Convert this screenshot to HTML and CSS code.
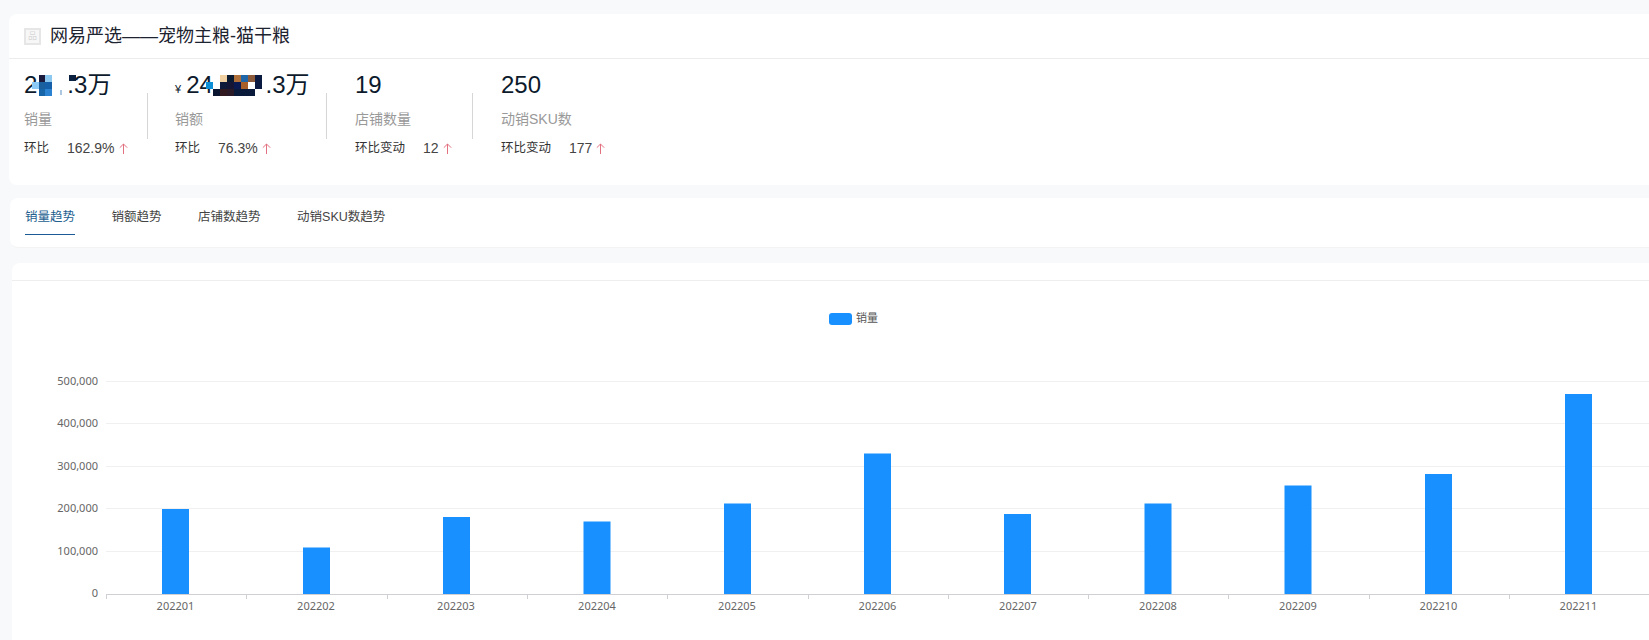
FILE: index.html
```html
<!DOCTYPE html>
<html lang="zh-CN">
<head>
<meta charset="utf-8">
<title>网易严选——宠物主粮-猫干粮</title>
<link rel="stylesheet" href="styles.css">
</head>
<body>
<main class="page">
  <section class="card card-summary">
    <header class="summary-head">
      <span class="thumb">品</span>
      <h1 class="title">网易严选——宠物主粮-猫干粮</h1>
    </header>
    <div class="stats">
      <div class="stat stat-a">
        <div class="value">2<svg class="mosaic mosaic-a" viewBox="0 0 44 21" aria-hidden="true">
            <rect x="7" y="0" width="6" height="7" fill="#1c1a3c"/><rect x="13" y="0" width="7" height="7" fill="#8cc8f0"/>
            <rect x="37" y="0" width="7" height="6" fill="#0a2040"/>
            <rect x="0" y="7" width="7" height="7" fill="#8ccbf5"/><rect x="7" y="7" width="6" height="7" fill="#1a5f9e"/><rect x="13" y="7" width="7" height="7" fill="#1560a8"/>
            <rect x="7" y="14" width="6" height="7" fill="#1565a8"/><rect x="13" y="14" width="7" height="7" fill="#2a82d0"/>
            <rect x="28.5" y="15" width="1" height="5" fill="#5a90c0"/>
          </svg>.3万</div>
        <div class="label">销量</div>
        <div class="delta"><span>环比</span><span class="delta-num">162.9%</span><svg class="arrow" viewBox="0 0 9 11" aria-hidden="true"><path d="M4.5 11V1M.8 4.7 4.5 1l3.7 3.7"/></svg></div>
      </div>
      <div class="divider"></div>
      <div class="stat stat-b">
        <div class="value"><span class="currency">¥</span>24,<svg class="mosaic mosaic-b" viewBox="0 0 56 21" aria-hidden="true">
            <rect x="7" y="0" width="7" height="7" fill="#f0d0a0"/><rect x="14" y="0" width="7" height="7" fill="#0a1a30"/><rect x="21" y="0" width="7" height="7" fill="#b0703a"/><rect x="28" y="0" width="7" height="7" fill="#1f66a8"/><rect x="35" y="0" width="7" height="7" fill="#8a5a3a"/><rect x="42" y="0" width="7" height="7" fill="#0a1a40"/>
            <rect x="7" y="7" width="7" height="7" fill="#0f1a3a"/><rect x="14" y="7" width="7" height="7" fill="#151535"/><rect x="21" y="7" width="7" height="7" fill="#0a1a50"/><rect x="28" y="7" width="7" height="7" fill="#a85f28"/><rect x="35" y="7" width="7" height="7" fill="#fff"/><rect x="42" y="7" width="7" height="7" fill="#0a1a40"/>
            <rect x="0" y="14" width="7" height="7" fill="#0a1530"/><rect x="7" y="14" width="7" height="7" fill="#301a20"/><rect x="14" y="14" width="7" height="7" fill="#2a1a28"/><rect x="21" y="14" width="7" height="7" fill="#0a1a3a"/><rect x="28" y="14" width="7" height="7" fill="#0a1a3a"/><rect x="35" y="14" width="7" height="7" fill="#0a1a3a"/>
            <rect x="-7" y="7" width="7" height="7" fill="#0d8fd8"/>
          </svg>.3万</div>
        <div class="label">销额</div>
        <div class="delta"><span>环比</span><span class="delta-num">76.3%</span><svg class="arrow" viewBox="0 0 9 11" aria-hidden="true"><path d="M4.5 11V1M.8 4.7 4.5 1l3.7 3.7"/></svg></div>
      </div>
      <div class="divider"></div>
      <div class="stat stat-c">
        <div class="value">19</div>
        <div class="label">店铺数量</div>
        <div class="delta"><span>环比变动</span><span class="delta-num">12</span><svg class="arrow" viewBox="0 0 9 11" aria-hidden="true"><path d="M4.5 11V1M.8 4.7 4.5 1l3.7 3.7"/></svg></div>
      </div>
      <div class="divider"></div>
      <div class="stat">
        <div class="value">250</div>
        <div class="label">动销SKU数</div>
        <div class="delta"><span>环比变动</span><span class="delta-num">177</span><svg class="arrow" viewBox="0 0 9 11" aria-hidden="true"><path d="M4.5 11V1M.8 4.7 4.5 1l3.7 3.7"/></svg></div>
      </div>
    </div>
  </section>

  <nav class="card card-tabs">
    <a class="tab tab-active">销量趋势</a>
    <a class="tab">销额趋势</a>
    <a class="tab">店铺数趋势</a>
    <a class="tab">动销SKU数趋势</a>
  </nav>

  <section class="card card-chart">
    <div class="chart-head"></div>
    <svg class="chart" viewBox="12 281 1637 359" role="img" aria-label="销量趋势">
      <rect class="legend-key" x="829" y="313" width="23" height="12" rx="3"/>
      <text class="legend-text" x="856" y="322">销量</text>

      <g class="grid">
        <path d="M106 381.5H1649"/><path d="M106 423.5H1649"/><path d="M106 466.5H1649"/><path d="M106 508.5H1649"/><path d="M106 551.5H1649"/>
      </g>

      <g class="y-labels">
        <text x="98" y="385">500,000</text>
        <text x="98" y="427">400,000</text>
        <text x="98" y="470">300,000</text>
        <text x="98" y="512">200,000</text>
        <text x="98" y="555">100,000</text>
        <text x="98" y="597">0</text>
      </g>

      <g class="bars">
        <rect x="162" y="509" width="27" height="85"/>
        <rect x="303" y="547.5" width="27" height="46.5"/>
        <rect x="443" y="517" width="27" height="77"/>
        <rect x="583.5" y="521.5" width="27" height="72.5"/>
        <rect x="724" y="503.5" width="27" height="90.5"/>
        <rect x="864" y="453.5" width="27" height="140.5"/>
        <rect x="1004" y="514" width="27" height="80"/>
        <rect x="1144.5" y="503.5" width="27" height="90.5"/>
        <rect x="1284.5" y="485.5" width="27" height="108.5"/>
        <rect x="1425" y="474" width="27" height="120"/>
        <rect x="1565" y="394" width="27" height="200"/>
      </g>

      <g class="axis">
        <path d="M106 594.5H1649"/>
        <path d="M106.500 594v5M246.500 594v5M387.500 594v5M527.500 594v5M667.500 594v5M808.500 594v5M948.500 594v5M1088.500 594v5M1228.500 594v5M1369.500 594v5M1509.500 594v5"/>
      </g>

      <g class="x-labels">
        <text x="175.500" y="610">202201</text>
        <text x="316" y="610">202202</text>
        <text x="456" y="610">202203</text>
        <text x="597" y="610">202204</text>
        <text x="737" y="610">202205</text>
        <text x="877.500" y="610">202206</text>
        <text x="1018" y="610">202207</text>
        <text x="1158" y="610">202208</text>
        <text x="1298" y="610">202209</text>
        <text x="1438.500" y="610">202210</text>
        <text x="1578.500" y="610">202211</text>
      </g>
    </svg>
  </section>
</main>
</body>
</html>
```
FILE: styles.css
```css
* { box-sizing: border-box; }

html, body {
  margin: 0;
  height: 640px;
  overflow: hidden;
}

body {
  background: #f8f9fb;
  font-family: "Liberation Sans", "Noto Sans CJK SC", sans-serif;
  color: #333;
}

.page {
  padding: 14px 0 0 9px;
}

.card {
  background: #fff;
  border-radius: 8px 0 0 8px;
}

/* summary */
.card-summary { height: 171px; }

.summary-head {
  display: flex;
  align-items: center;
  height: 45px;
  padding-left: 15px;
  border-bottom: 1px solid #ececec;
}

.thumb {
  width: 17px;
  height: 17px;
  margin-right: 9px;
  border: 2px solid #e6e6e6;
  background: #f7f7f7;
  color: #d8d8d8;
  font-size: 9px;
  line-height: 13px;
  text-align: center;
}

.title {
  margin: 0;
  font-size: 18px;
  font-weight: 400;
  color: #1d2430;
  line-height: 24px;
}

.stats {
  display: flex;
  padding-left: 15px;
}

.stat { flex: none; }
.stat-a { width: 123px; }
.stat-b { width: 151px; margin-left: -1px; }
.stat-c { width: 117px; }

.divider {
  flex: none;
  width: 1px;
  height: 46px;
  margin: 34px 28px 0 0;
  background: #d6d6d6;
}

.value {
  margin-top: 9px;
  height: 34px;
  font-size: 24px;
  line-height: 34px;
  color: #0c1a2c;
  white-space: nowrap;
}

.currency {
  margin-right: 5px;
  font-size: 11px;
}

.mosaic {
  height: 21px;
  overflow: visible;
  vertical-align: -3px;
}

.mosaic-a {
  width: 44px;
  margin-left: -5px;
  margin-right: -9px;
}

.mosaic-b {
  width: 56px;
  margin-left: -6.5px;
  margin-right: -3.5px;
}

.label {
  margin-top: 7px;
  font-size: 14px;
  line-height: 20px;
  color: #999;
}

.delta {
  display: flex;
  align-items: center;
  margin-top: 9px;
  font-size: 12.5px;
  line-height: 20px;
  white-space: nowrap;
}

.delta-num {
  margin-left: 18px;
  font-size: 14px;
  color: #444;
}

.arrow {
  width: 9px;
  height: 11px;
  margin-left: 4px;
  fill: none;
  stroke: #e2707f;
  stroke-width: 1;
}

/* tabs */
.card-tabs {
  display: flex;
  gap: 36.5px;
  height: 50px;
  margin: 13px 0 15px 1px;
  padding-left: 15px;
  border-bottom: 1px solid #f3f3f3;
}

.tab {
  height: 37px;
  padding-top: 9px;
  font-size: 12.5px;
  line-height: 20px;
  color: #444;
}

.tab-active {
  color: #23608f;
  border-bottom: 1px solid #1c5a96;
}

/* chart */
.card-chart {
  margin-left: 3px;
  border-radius: 8px 0 0 0;
}

.chart-head {
  height: 18px;
  border-bottom: 1px solid #eeeeee;
}

.chart {
  display: block;
  width: 1637px;
  height: 359px;
}

.legend-key { fill: #1890ff; }

.legend-text {
  font-family: "Noto Sans CJK SC", sans-serif;
  font-size: 11px;
  fill: #555;
}

.grid path {
  fill: none;
  stroke: #f0f0f0;
  stroke-width: 1;
}

.axis path {
  fill: none;
  stroke: #cfcfd4;
  stroke-width: 1;
}

.bars rect { fill: #1890ff; }

.y-labels text,
.x-labels text {
  font-family: "Noto Sans", sans-serif;
  font-size: 11px;
  fill: #666;
}

.y-labels text { text-anchor: end; }
.x-labels text { text-anchor: middle; }
```
